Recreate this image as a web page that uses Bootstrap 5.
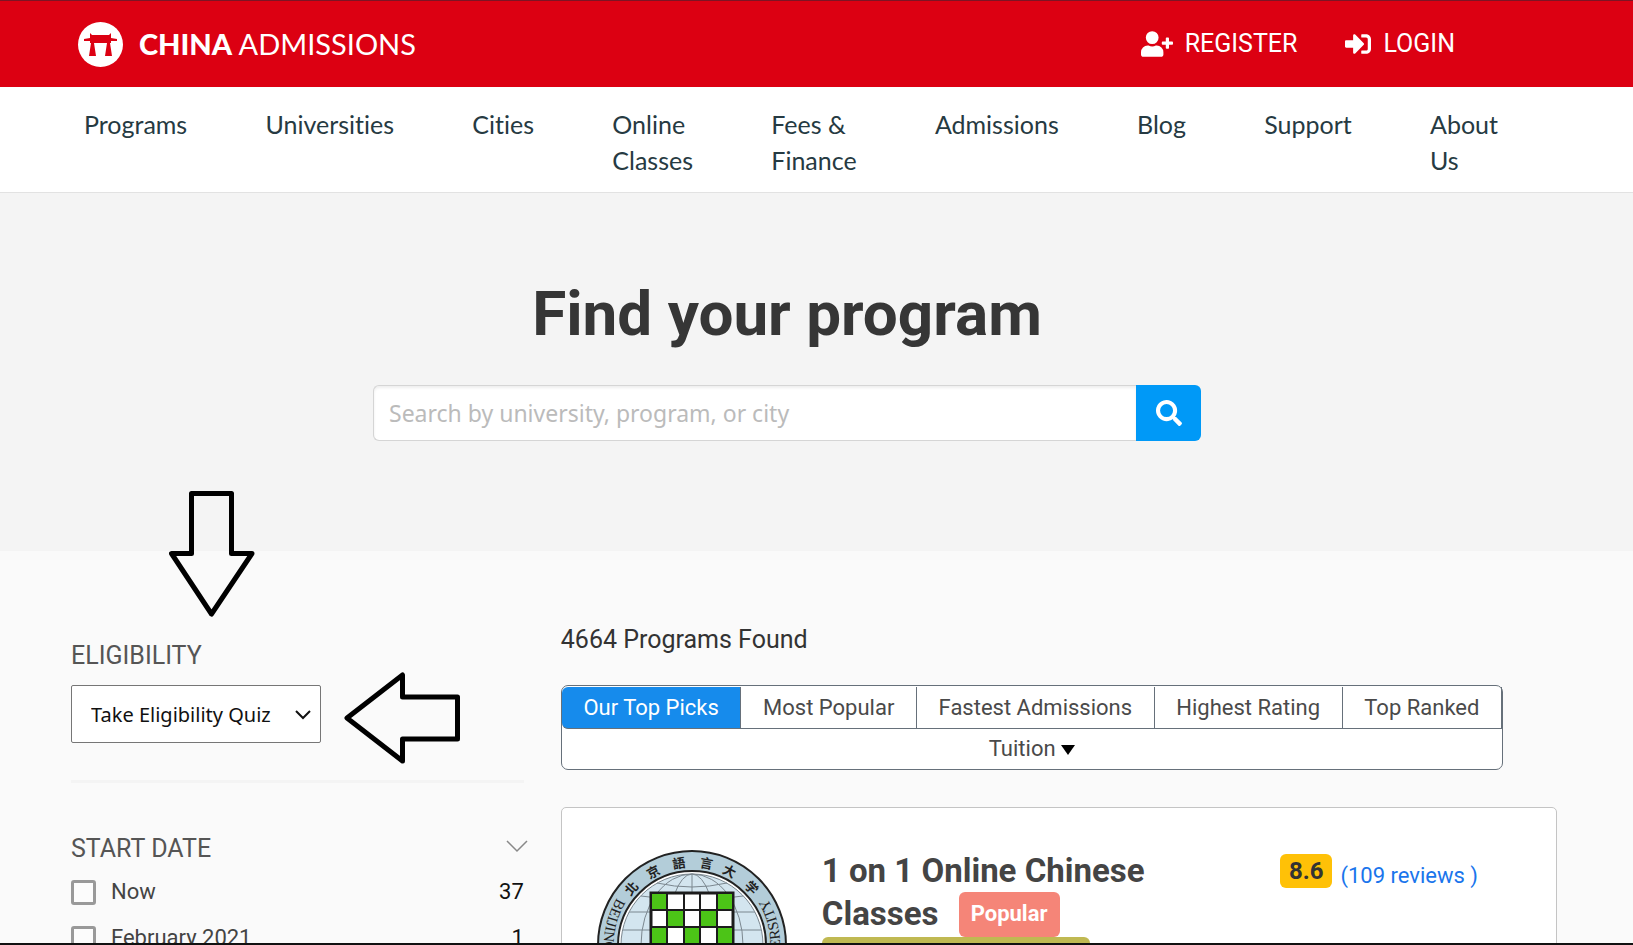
<!DOCTYPE html>
<html lang="en">
<head>
<meta charset="utf-8">
<meta name="viewport" content="width=device-width, initial-scale=1">
<title>China Admissions - Find your program</title>
<link href="https://cdn.jsdelivr.net/npm/bootstrap@5.3.0/dist/css/bootstrap.min.css" rel="stylesheet">
<style>
  body { font-family: Roboto, "Liberation Sans", sans-serif; background: #fafafa; color: #333; font-size: 22px; line-height: 30px; }
  a { text-decoration: none; }
  .topbar { background: #dc0012; border-top: 1px solid #7d1424; height: 87px; padding: 0 178px 0 78px; }
  .brand { font: 400 29px/44px Lato, sans-serif; gap: 16px; }
  .brand b { font-weight: 900; }
  .account { gap: 48px; font-size: 25px; line-height: 36px; }
  .account a { gap: 12px; }
  .mainmenu { background: #fff; border-bottom: 1px solid #e2e2e2; padding: 19px 135px 14px 84px; font: 25px/36px Lato, sans-serif; font-variant-ligatures: none; }
  .mainmenu a { color: #263a42; }
  .hero { background: #f4f4f4; padding: 84px 59px 110px 0; }
  .hero h1 { font-size: 62px; line-height: 74px; font-weight: 700; color: #363636; margin-bottom: 34px; }
  .finder { width: 828px; max-width: 100%; height: 56px; }
  .finder .form-control { font: 23px/36px "Noto Sans", sans-serif; border: 1px solid #d5d5d5; border-right: 0; border-radius: 6px 0 0 6px; padding: 9px 15px; box-shadow: inset 0 2px 3px #eee; }
  .finder .form-control::placeholder { color: #bbb; }
  .finder .btn { width: 65px; background: #0099f7; border: 0; border-radius: 0 6px 6px 0; }
  .results { display: grid; grid-template-columns: 5fr 11fr; column-gap: 37px; padding: 71px 76px 0 71px; }
  .filters { padding-top: 16px; }
  .filter-title { font-size: 25px; line-height: 36px; font-weight: 400; color: #555; margin: 0; }
  .quiz { width: 250px; height: 58px; margin: 11px 0 37px; padding: 2px 34px 0 19px; background: #fff; border: 1px solid #767676; border-radius: 2px; color: #111; font: 20px/30px "Noto Sans", sans-serif; appearance: none; }
  .quiz-chevron { position: absolute; left: 224px; top: 25px; }
  .arrow-down { position: absolute; left: 98px; top: -195px; }
  .arrow-left { position: absolute; left: 273px; top: -13px; }
  .rule { border-top: 3px solid #f4f4f4; margin-bottom: 48px; }
  .toggle-icon { margin: 0 -4px 4px 0; }
  .option { height: 46px; }
  .option-list { padding-top: 2px; }
  .option input { appearance: none; width: 25px; height: 25px; margin: 0 15px 0 0; border: 3px solid #999; border-radius: 3px; background: #fcfcfc; }
  .option label { color: #444; }
  .option span { color: #111; }
  .found { font-size: 25px; line-height: 36px; font-weight: 400; margin: 0 0 27px; }
  .sortbar { margin-right: 54px; background: #fff; border: 1px solid #66707a; border-radius: 7px; padding-top: 1px; }
  .sortbar button { background: none; border: 0; border-right: 1px solid #66707a; border-bottom: 1px solid #66707a; color: #4a4a4a; padding: 6px 0 5px; line-height: 30px; }
  .sortbar button.picked { background: #168bec; color: #fff; border-radius: 6px 0 0 6px; }
  .sortbar button.tuition { border: 0; padding: 5px 0; }
  .program { border: 1px solid #c4c4c4; border-radius: 5px; background: #fff; margin-top: 37px; padding: 42px 78px 40px 35px; }
  .program-name { font-size: 33px; line-height: 43px; font-weight: 700; color: #444; margin: -1px 0 0 35px; width: 380px; }
  .popular { display: inline-block; background: #f58578; color: #fff; border-radius: 6px; font-size: 22px; line-height: 30px; padding: 7px 12px 8px; margin-left: 12px; vertical-align: top; }
  .strip { width: 268px; height: 38px; margin: -8px 0 0 35px; border-radius: 6px; background: #c0b952; }
  .score { background: #ffc107; color: #333; font-weight: 700; font-size: 24px; line-height: 34px; border-radius: 6px; padding: 0 9px; }
  .reviews { color: #1a75ec; margin-top: 7px; }
  .screen-edge { position: fixed; inset: auto 0 0; height: 2px; background: #111; }
</style>
</head>
<body class="vh-100 overflow-hidden">
<header class="topbar d-flex align-items-center justify-content-between">
  <a href="#" class="brand d-flex align-items-center text-white">
    <svg width="45" height="45" viewBox="0 0 45 45"><circle cx="22.500" cy="22.500" r="22.500" fill="#fff"/><path fill="#dc0012" d="M12 11l2 2h17l2-2v5l6 1v2h-6v2h-1l2 13h-7l2-13H16l2 13h-7l2-13h-1v-2H6v-2l6-1z"/></svg>
    <span><b>CHINA</b> ADMISSIONS</span>
  </a>
  <nav class="account d-flex" aria-label="Account">
    <a href="#" class="d-flex align-items-center text-white">
      <svg width="32" height="26" viewBox="0 0 640 512" fill="#fff"><path d="M624 208h-64v-64c0-9-7-16-16-16h-32c-9 0-16 7-16 16v64h-64c-9 0-16 7-16 16v32c0 9 7 16 16 16h64v64c0 9 7 16 16 16h32c9 0 16-7 16-16v-64h64c9 0 16-7 16-16v-32c0-9-7-16-16-16zM224 256a128 128 0 1 0 0-256 128 128 0 0 0 0 256zm90 32h-17a174 174 0 0 1-146 0h-17A134 134 0 0 0 0 422v42c0 27 21 48 48 48h352c27 0 48-21 48-48v-42a134 134 0 0 0-134-134z"/></svg>
      REGISTER</a>
    <a href="#" class="d-flex align-items-center text-white">
      <svg width="26" height="26" viewBox="0 0 512 512" fill="#fff"><path d="M416 448h-84c-7 0-12-5-12-12v-40c0-7 5-12 12-12h84c18 0 32-14 32-32V160c0-18-14-32-32-32h-84c-7 0-12-5-12-12V76c0-7 5-12 12-12h84c53 0 96 43 96 96v192c0 53-43 96-96 96zm-47-209L201 71c-15-15-41-4-41 17v96H24c-13 0-24 11-24 24v96c0 13 11 24 24 24h136v96c0 22 26 32 41 17l168-168c9-9 9-25 0-34z"/></svg>
      LOGIN</a>
  </nav>
</header>
<nav class="mainmenu d-flex justify-content-between align-items-start" aria-label="Main">
  <a href="#">Programs</a>
  <a href="#">Universities</a>
  <a href="#">Cities</a>
  <a href="#">Online<br>Classes</a>
  <a href="#">Fees &amp;<br>Finance</a>
  <a href="#">Admissions</a>
  <a href="#">Blog</a>
  <a href="#">Support</a>
  <a href="#">About<br>Us</a>
</nav>
<section class="hero text-center">
  <h1>Find your program</h1>
  <form class="finder d-flex mx-auto" role="search">
    <input type="search" class="form-control" placeholder="Search by university, program, or city" aria-label="Search programs">
    <button type="button" class="btn p-0 flex-shrink-0" aria-label="Search">
      <svg width="26" height="26" viewBox="0 0 512 512" fill="#fff"><path d="M505 443l-100-100c-4-4-10-7-17-7h-16a208 208 0 1 0-36 36v16c0 7 3 13 7 17l100 100c9 9 24 9 34 0l28-28c9-10 9-25 0-34zM208 336a128 128 0 1 1 0-256 128 128 0 0 1 0 256z"/></svg>
    </button>
  </form>
</section>
<main class="results">
  <aside class="filters">
    <label class="filter-title d-block" for="quiz">ELIGIBILITY</label>
    <div class="position-relative">
      <select id="quiz" class="quiz d-block"><option>Take Eligibility Quiz</option></select>
      <svg class="quiz-chevron" width="16" height="11" fill="none" stroke="#111" stroke-width="2"><path d="M1 1l7 7 7-7"/></svg>
      <svg class="arrow-down" width="86" height="128" fill="none" stroke="#000" stroke-width="5" stroke-linejoin="round"><path d="M22.500 3.500h40v60h20.500L42.500 124 2.500 63.500h20z"/></svg>
      <svg class="arrow-left" width="118" height="92" fill="none" stroke="#000" stroke-width="5" stroke-linejoin="round"><path d="M3 46L58.500 3v22h55v42h-55v22z"/></svg>
    </div>
    <div class="rule"></div>
    <div class="d-flex justify-content-between align-items-center">
      <h2 class="filter-title">START DATE</h2>
      <svg class="toggle-icon" width="22" height="14" fill="none" stroke="#888" stroke-width="1.500"><path d="M1 1l10 10L21 1"/></svg>
    </div>
    <div class="option-list">
      <div class="option d-flex align-items-center"><input type="checkbox" id="d1"><label for="d1">Now</label><span class="ms-auto">37</span></div>
      <div class="option d-flex align-items-center"><input type="checkbox" id="d2"><label for="d2">February 2021</label><span class="ms-auto">1</span></div>
    </div>
  </aside>
  <section>
    <h2 class="found">4664 Programs Found</h2>
    <div class="sortbar">
      <div class="d-flex">
        <button type="button" class="picked flex-grow-1">Our Top Picks</button>
        <button type="button" class="flex-grow-1">Most Popular</button>
        <button type="button" class="flex-grow-1">Fastest Admissions</button>
        <button type="button" class="flex-grow-1">Highest Rating</button>
        <button type="button" class="flex-grow-1">Top Ranked</button>
      </div>
      <button type="button" class="tuition w-100">Tuition <svg width="14" height="10"><path d="M0 0h14l-7 10z"/></svg></button>
    </div>
    <article class="program d-flex align-items-start">
      <svg class="flex-shrink-0" width="190" height="190" viewBox="0 0 190 190">
        <circle cx="95" cy="95" r="94" fill="#b3cdd9" stroke="#222" stroke-width="2"/>
        <circle cx="95" cy="95" r="74" fill="#fff" stroke="#222" stroke-width="2"/>
        <circle cx="95" cy="95" r="71" fill="#d3e5ef" stroke="#7b878f"/>
        <g fill="none" stroke="#7b878f"><ellipse cx="95" cy="95" rx="51" ry="71"/><ellipse cx="95" cy="95" rx="25" ry="71"/><path d="M95 24v142M60 33q35 8 70 0M44 46q51 8 102 0M32 62h126M26 80h138M24 97h142M30 125h130"/></g>
        <path fill="#fff" stroke="#1c1c1c" stroke-width="3" d="M54 43h82v86H54z"/>
        <path fill="#4cc417" d="M54 43h16v17H54zM120 43h16v17h-16zM70 60h17v17H70zM103 60h17v17h-17zM54 77h16v18H54zM87 77h16v18H87zM120 77h16v18h-16z"/>
        <path fill="none" stroke="#1c1c1c" stroke-width="2" d="M54 43h82v86H54zM70 43v86M87 43v86M103 43v86M120 43v86M54 60h82M54 77h82M54 95h82M54 112h82"/>
        <path id="ring" fill="none" d="M20 48A88 88 0 1 0 170 48"/>
        <g font-family="Liberation Serif, serif" font-size="15" fill="#222"><text><textPath href="#ring">BEIJING</textPath></text><text text-anchor="end"><textPath href="#ring" startOffset="100%">UNIVERSITY</textPath></text></g>
        <g font-family="Noto Sans CJK TC, sans-serif" font-size="13" font-weight="700" fill="#222" text-anchor="middle">
          <text x="95" y="17" transform="rotate(-47 95 95)">北</text><text x="95" y="17" transform="rotate(-28 95 95)">京</text><text x="95" y="17" transform="rotate(-9 95 95)">語</text><text x="95" y="17" transform="rotate(10 95 95)">言</text><text x="95" y="17" transform="rotate(27 95 95)">大</text><text x="95" y="17" transform="rotate(46 95 95)">学</text>
        </g>
      </svg>
      <div>
        <h3 class="program-name">1 on 1 Online Chinese Classes <span class="popular">Popular</span></h3>
        <div class="strip mt-0"></div>
      </div>
      <div class="d-flex ms-auto mt-1 align-items-start gap-2 text-nowrap"><span class="score">8.6</span><a href="#" class="reviews">(109 reviews )</a></div>
    </article>
  </section>
</main>
<div class="screen-edge"></div>
<script src="https://cdn.jsdelivr.net/npm/bootstrap@5.3.0/dist/js/bootstrap.bundle.min.js"></script>
</body>
</html>
